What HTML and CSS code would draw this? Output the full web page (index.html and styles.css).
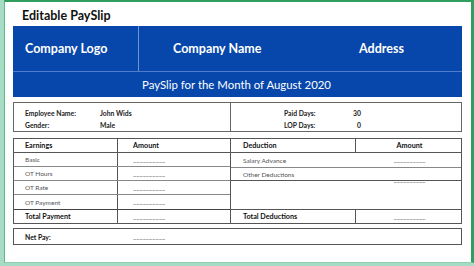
FILE: index.html
```html
<!DOCTYPE html>
<html>
<head>
<meta charset="utf-8">
<link rel="stylesheet" href="styles.css">
</head>
<body>
<div class="frame">
  <div class="title">Editable PaySlip</div>
  <div class="header">
    <div class="top-row">
      <div class="cell logo">Company Logo</div>
      <div class="cell name">Company Name</div>
      <div class="cell addr">Address</div>
    </div>
    <div class="sub-row">PaySlip for the Month of August 2020</div>
  </div>

  <div class="info">
    <div class="info-left">
      <span class="lbl">Employee Name:</span><span class="val">John Wids</span>
      <span class="lbl">Gender:</span><span class="val">Male</span>
    </div>
    <div class="info-right">
      <span class="lbl">Paid Days:</span><span class="val num">30</span>
      <span class="lbl">LOP Days:</span><span class="val num">0</span>
    </div>
  </div>

  <div class="tables">
    <div class="earn">
      <div class="row head"><div class="c1">Earnings</div><div class="c2">Amount</div></div>
      <div class="row"><div class="c1">Basic</div><div class="c2"><span class="blank">__________</span></div></div>
      <div class="row"><div class="c1">OT Hours</div><div class="c2"><span class="blank">__________</span></div></div>
      <div class="row"><div class="c1">OT Rate</div><div class="c2"><span class="blank">__________</span></div></div>
      <div class="row"><div class="c1">OT Payment</div><div class="c2"><span class="blank">__________</span></div></div>
      <div class="row head last"><div class="c1">Total Payment</div><div class="c2"><span class="blank">__________</span></div></div>
    </div>
    <div class="ded">
      <div class="drow head div"><div class="d1">Deduction</div><div class="d2">Amount</div></div>
      <div class="drow"><div class="d1">Salary Advance</div><div class="d2"><span class="blank">__________</span></div></div>
      <div class="drow line"><div class="d1">Other Deductions</div><div class="d2"><span class="blank low">__________</span></div></div>
      <div class="spacer"></div>
      <div class="drow head div top"><div class="d1">Total Deductions</div><div class="d2"><span class="blank">__________</span></div></div>
    </div>
  </div>

  <div class="netpay">
    <div class="c1">Net Pay:</div><div class="c2"><span class="blank">__________</span></div>
  </div>
</div>
</body>
</html>
```
FILE: styles.css
```css
* { box-sizing: border-box; }
html, body { margin: 0; padding: 0; }
body {
  width: 474px;
  height: 266px;
  background: #a6dcc6;
  font-family: Lato, "Open Sans", sans-serif;
  overflow: hidden;
}
.frame {
  margin-left: 4px;
  width: 470px;
  height: 263px;
  background: #fff;
  border-top: 2px solid #2f9e5f;
  border-right: 3px solid #2f9e5f;
  border-left: 1px solid #5fb88a;
  border-bottom: 1px solid #8fcfae;
  padding: 0 5px 0 8px;
}
.title {
  font-weight: 700;
  font-size: 12.5px;
  color: #111;
  height: 24px;
  padding-left: 9px;
  padding-top: 6px;
  line-height: 16px;
}
.header {
  background: #0747ab;
  color: #fff;
  width: 449px;
}
.top-row {
  display: flex;
  height: 46px;
  border-bottom: 1px solid #4f7fcc;
}
.cell {
  display: flex;
  align-items: center;
  font-weight: 700;
  font-size: 12.5px;
}
.logo {
  width: 126px;
  padding-left: 12px;
  border-right: 1px solid #6f95d6;
}
.name { width: 220px; padding-left: 34px; }
.addr { padding-left: 0; }
.sub-row {
  height: 25px;
  display: flex;
  align-items: center;
  justify-content: center;
  font-size: 11.4px;
  padding-right: 2px;
}

.info {
  margin-top: 5px;
  width: 449px;
  height: 30px;
  border: 1px solid #666;
  display: flex;
  font-size: 6.8px;
  font-weight: 700;
  color: #222;
}
.info-left {
  width: 217px;
  border-right: 1px solid #666;
  display: grid;
  grid-template-columns: 75px 1fr;
  grid-auto-rows: 12px;
  align-items: center;
  padding: 4px 0 0 11px;
}
.info-right {
  flex: 1;
  display: grid;
  grid-template-columns: 60px 17px;
  grid-auto-rows: 12px;
  align-items: center;
  padding: 4px 0 0 53px;
}
.num { text-align: right; }

.tables {
  margin-top: 6px;
  display: flex;
  width: 449px;
}
.earn {
  width: 217px;
  border: 1px solid #555;
  border-right: none;
}
.row {
  display: flex;
  height: 14px;
  border-bottom: 1px solid #888;
  font-size: 6.5px;
  color: #555;
}
.row.last { border-bottom: none; border-top: 1px solid #444; height: 14px; }
.row:nth-child(5) { border-bottom: none; }
.row.head { color: #111; font-weight: 700; font-size: 7.2px; }
.row.head:first-child { border-bottom: 1px solid #555; }
.c1 {
  width: 104px;
  border-right: 1px solid #555;
  padding-left: 11px;
  display: flex;
  align-items: center;
}
.c2 {
  flex: 1;
  display: flex;
  align-items: center;
  padding-left: 15px;
}
.blank {
  color: #666;
  font-size: 7px;
  font-weight: 400;
  position: relative;
  top: -1px;
}
.blank.low { top: 5px; }

.ded {
  flex: 1;
  border: 1px solid #555;
  display: flex;
  flex-direction: column;
}
.drow {
  display: flex;
  height: 14px;
  font-size: 6.5px;
  color: #555;
}
.drow.head { color: #111; font-weight: 700; font-size: 7.2px; border-bottom: 1px solid #555; }
.drow.head.top { border-bottom: none; border-top: 1px solid #555; }
.drow.line { border-bottom: 1px solid #555; border-top: 1px solid #888; }
.drow .d1 { width: 125px; padding-left: 12px; display: flex; align-items: center; }
.drow.div .d1 { border-right: 1px solid #555; }
.drow .d2 { flex: 1; display: flex; align-items: center; justify-content: center; padding-left: 2px; }
.spacer { flex: 1; }

.netpay {
  margin-top: 4px;
  width: 449px;
  height: 17px;
  border: 1px solid #555;
  display: flex;
  font-size: 6.8px;
  font-weight: 700;
  color: #111;
}
.netpay .c1 { border-right: none; }
```
